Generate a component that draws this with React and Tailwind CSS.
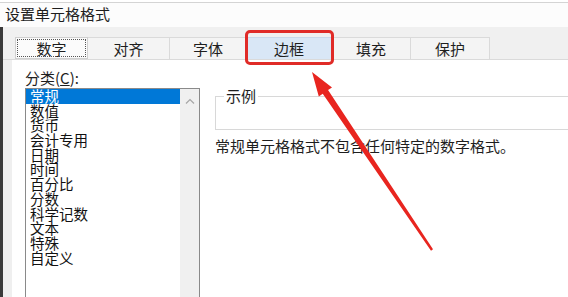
export default function App() {
  const items = ["常规", "数值", "货币", "会计专用", "日期", "时间", "百分比", "分数", "科学记数", "文本", "特殊", "自定义"];
  return (
    <div className="relative w-[568px] h-[297px] overflow-hidden bg-white text-[#1e1e1e] font-[family-name:'Noto_Sans_CJK_SC','Noto_Sans',sans-serif] flex flex-col">
      <div className="mt-[2px] h-[25px] shrink-0 border-t border-[#d4d4d4] pl-[5px] text-[15px] leading-[22px] bg-[#fcfcfc]">设置单元格格式</div>
      <div className="flex flex-1 min-h-0">
        <div className="w-[3px] bg-[#3a3a3a] shrink-0" />
        <div className="flex flex-col flex-1 min-w-0">
          <div className="h-[33px] shrink-0 bg-[#f0f0f0] border-b border-[#dadada] pt-[10px] pl-[12px] flex items-start">
            <div className="w-[73px] h-[22px] bg-[#fbfbfb] border border-[#cfcfcf] p-[1px]">
              <div className="h-full border border-dotted border-[#555] flex items-center justify-center text-[15px] leading-none">数字</div>
            </div>
            <div className="w-[82px] h-[22px] bg-[#f4f4f4] border-t border-r border-[#dadada] flex items-center justify-center text-[15px] leading-none">对齐</div>
            <div className="w-[77px] h-[22px] bg-[#f4f4f4] border-t border-r border-[#dadada] flex items-center justify-center text-[15px] leading-none">字体</div>
            <div className="w-[85px] h-[22px] bg-[#d9e7f6] border-t border-r border-[#c9d9ea] flex items-center justify-center text-[15px] leading-none">边框</div>
            <div className="w-[79px] h-[22px] bg-[#f4f4f4] border-t border-r border-[#dadada] flex items-center justify-center text-[15px] leading-none">填充</div>
            <div className="w-[79px] h-[22px] bg-[#f4f4f4] border-t border-r border-[#dadada] flex items-center justify-center text-[15px] leading-none">保护</div>
          </div>
          <div className="flex flex-1 min-h-0">
            <div className="w-[9px] bg-[#efefef] shrink-0" />
            <div className="flex flex-1 min-w-0 pl-[13px]">
              <div className="w-[175px] shrink-0 flex flex-col pt-[10px]">
                <div className="text-[15px] leading-[16px] h-[16px]">分类(<span className="underline">C</span>):</div>
                <div className="mt-[2px] flex-1 border border-[#8a8a8a] border-b-0 flex">
                  <div className="flex-1 flex flex-col">
                    {items.map((t, i) => (
                      <div
                        key={t}
                        className={
                          i === 0
                            ? "bg-[#0078d7] text-white pl-[4px] text-[14.5px] leading-[14.7px] h-[14.7px]"
                            : "pl-[4px] text-[14.5px] leading-[14.7px] h-[14.7px] text-[#111]"
                        }
                      >
                        {t}
                      </div>
                    ))}
                  </div>
                  <div className="w-[19px] bg-[#f0f0f0] flex justify-center pt-[9px]">
                    <svg width="10" height="6" viewBox="0 0 10 6">
                      <polyline points="1,5.5 5,1.5 9,5.5" fill="none" stroke="#a6a6a6" strokeWidth="1.2" />
                    </svg>
                  </div>
                </div>
              </div>
              <div className="ml-[15px] flex flex-col">
                <fieldset className="mt-[28px] w-[370px] h-[42px] border border-[#d8d8d8]">
                  <legend className="ml-[8px] px-[2px] text-[15px] leading-[16px]">示例</legend>
                </fieldset>
                <div className="mt-[8px] text-[15px] leading-[16px] whitespace-nowrap">常规单元格格式不包含任何特定的数字格式。</div>
              </div>
            </div>
          </div>
        </div>
      </div>
      <div className="absolute left-[245px] top-[30px] w-[89px] h-[35px] border-[3px] border-[#e02b27] rounded-[5px]" />
      <svg className="absolute left-0 top-0" width="568" height="297" viewBox="0 0 568 297">
        <polygon
          points="312,72 332,87.4 328.05,90.1 433,249.3 431,250.7 322.75,93.7 318.8,96.4"
          fill="#e8251f"
        />
      </svg>
    </div>
  );
}
